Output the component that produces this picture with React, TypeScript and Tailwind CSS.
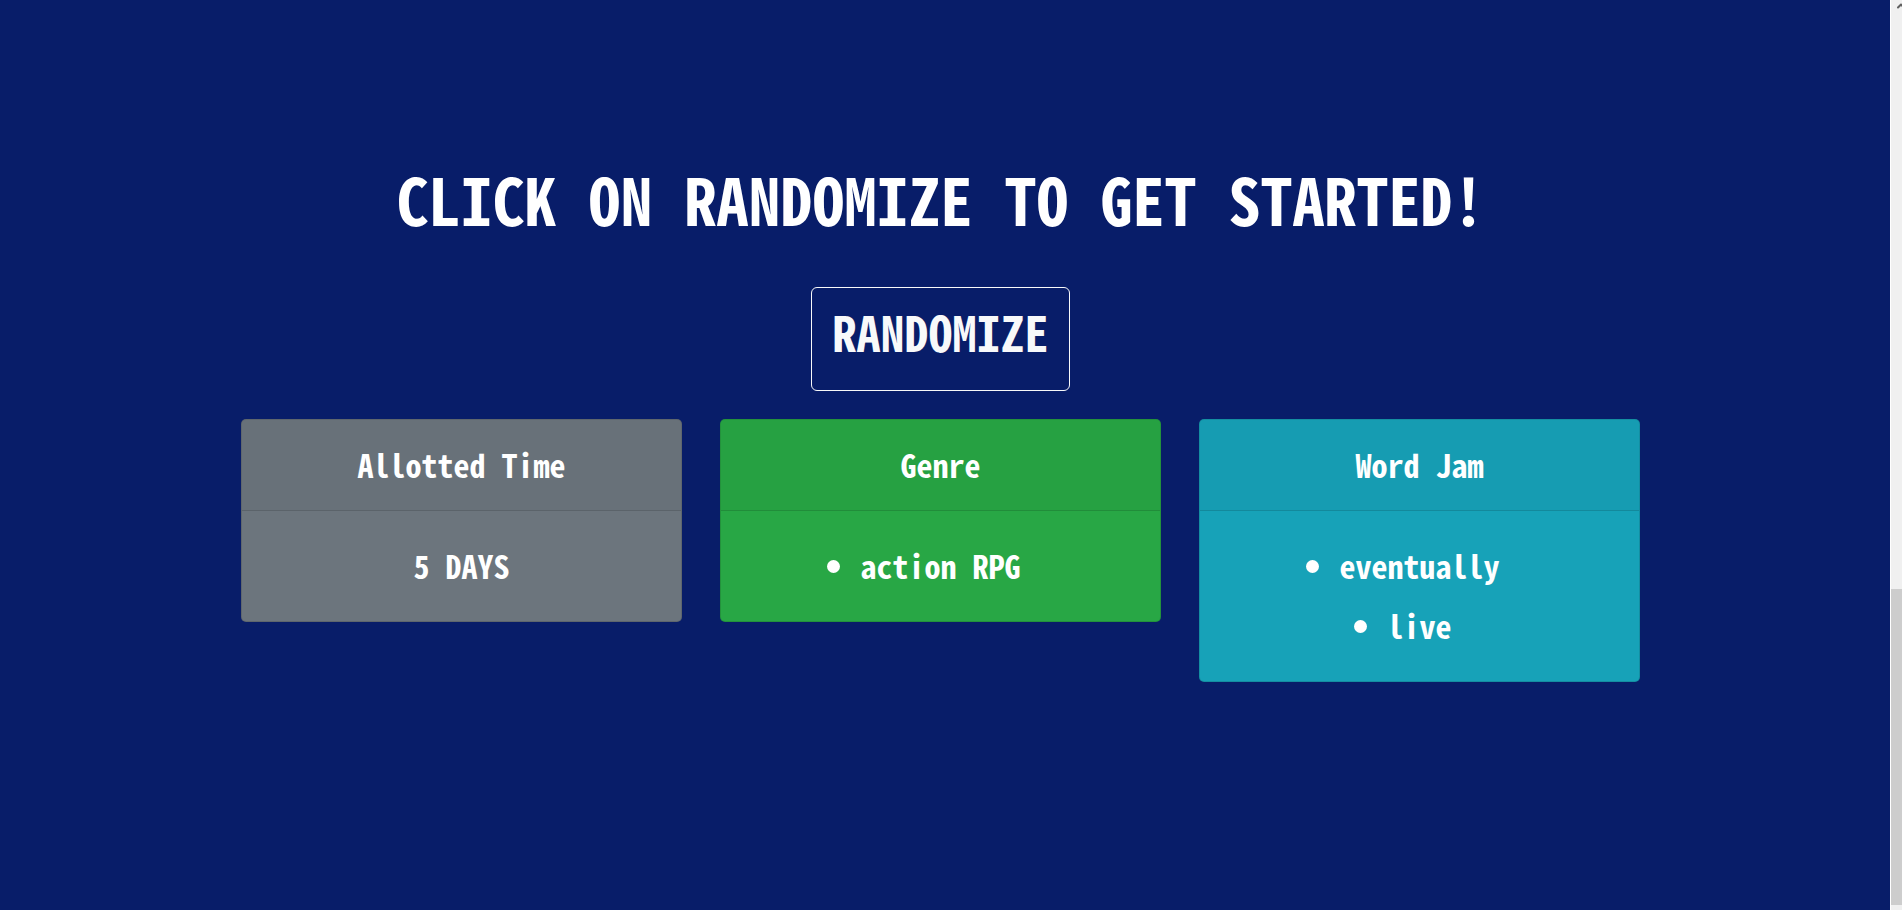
import type { ReactNode } from "react";
import { ChevronUp } from "lucide-react";

function Card({ title, tone, children }: { title: string; tone: string; children: ReactNode }) {
  return (
    <section className={`flex-1 overflow-hidden rounded-[5px] border border-black/12 ${tone}`}>
      <h2 className="border-b border-black/12 bg-black/3 pt-[14px] pb-4 text-center leading-[60px]">{title}</h2>
      <div className="pt-6 pb-[26px] text-center leading-[60px]">{children}</div>
    </section>
  );
}

function WordList({ words }: { words: string[] }) {
  return (
    <ul>
      {words.map((word) => (
        <li key={word} className="grid grid-cols-[1fr_auto_1fr] items-center gap-5">
          <span className="mt-0.5 size-[13px] justify-self-end rounded-full bg-white" />
          {word}
        </li>
      ))}
    </ul>
  );
}

export default function App() {
  return (
    <div className="flex min-h-screen bg-[#081d69] font-['Noto_Sans_Mono_CJK_JP','Noto_Sans_Mono_CJK_SC','DejaVu_Sans_Mono',monospace] text-[32px] font-bold text-white">
      <main className="flex flex-1 flex-col items-center pt-[154px] pr-[9px]">
        <h1 className="text-center text-[64px] leading-[88px]">CLICK ON RANDOMIZE TO GET STARTED!</h1>
        <button
          type="button"
          className="mt-[45px] h-[104px] rounded-md border border-[#f8f9fa] px-5 pb-4 text-5xl text-[#f8f9fa]"
        >
          RANDOMIZE
        </button>
        <div className="mt-7 flex w-full max-w-[1399px] items-start gap-[38px]">
          <Card title="Allotted Time" tone="bg-[#6c757d]">
            <p>5 DAYS</p>
          </Card>
          <Card title="Genre" tone="bg-[#28a745]">
            <WordList words={["action RPG"]} />
          </Card>
          <Card title="Word Jam" tone="bg-[#17a2b8]">
            <WordList words={["eventually", "live"]} />
          </Card>
        </div>
      </main>
      <aside aria-hidden="true" className="flex w-3 flex-col overflow-hidden border-l border-white bg-[#f0f0f0]">
        <ChevronUp className="ml-1 size-3 shrink-0 text-[#606060]" strokeWidth={4} />
        <div className="mt-[577px] mb-[5px] flex-1 bg-[#cdcdcd]" />
      </aside>
    </div>
  );
}
